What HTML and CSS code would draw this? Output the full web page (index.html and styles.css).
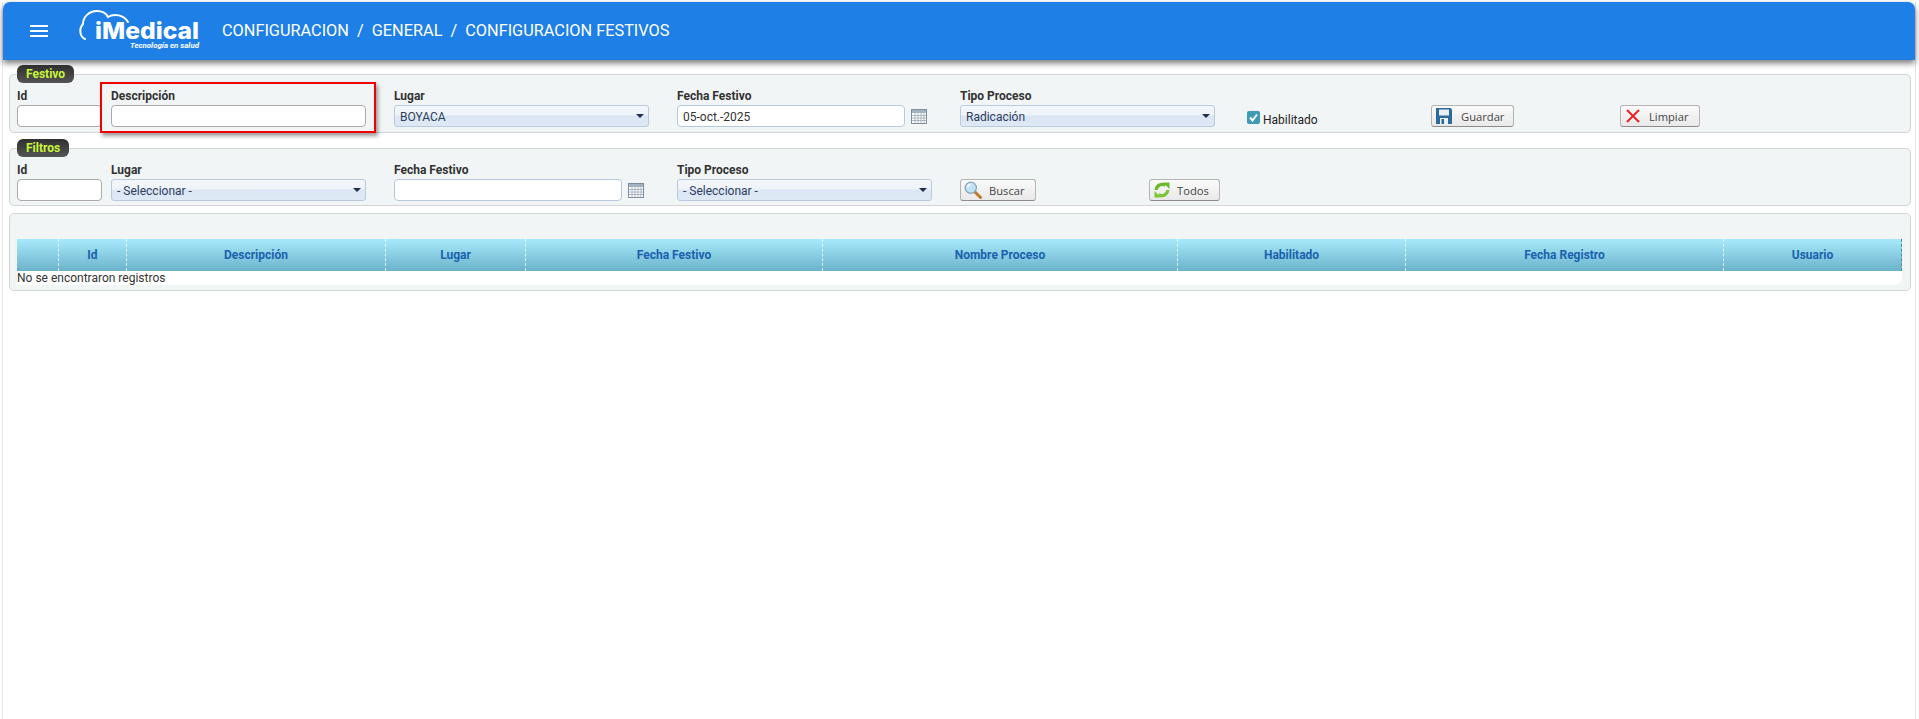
FILE: index.html
```html
<!DOCTYPE html>
<html lang="es">
<head>
    <meta charset="UTF-8">
    <meta name="viewport" content="width=device-width, initial-scale=1.0">
    <title>Configuracion Festivos</title>
    <link rel="stylesheet" href="styles.css">
</head>
<body>

    <div class="page">
        <header class="topbar">
            <button class="menu-btn" aria-label="Menu">
                <span></span><span></span><span></span>
            </button>
            <svg class="logo" width="124" height="42" viewBox="0 0 124 42">
                <path d="M6 30 C1 28 -0.5 20 4 15 C4 8 10 2 18 2 C23 2 27 4 29 8 C35 4 45 6 49 13" fill="none" stroke="#fff" stroke-width="2" stroke-linecap="round"/>
                <text class="logo-name" x="16" y="30" textLength="104" lengthAdjust="spacingAndGlyphs">iMedical</text>
                <text class="logo-tag" x="51" y="39" textLength="69" lengthAdjust="spacingAndGlyphs">Tecnología en salud</text>
            </svg>
            <h1 class="breadcrumb">CONFIGURACION &nbsp;/&nbsp; GENERAL &nbsp;/&nbsp; CONFIGURACION FESTIVOS</h1>
        </header>

        <main class="content">
            <fieldset class="panel">
                <legend>Festivo</legend>
                <div class="form-row form-festivo">
                    <div class="field">
                        <label>Id</label>
                        <input class="input input-id" type="text">
                    </div>
                    <div class="field field-mark">
                        <label>Descripción</label>
                        <input class="input input-id input-desc" type="text">
                    </div>
                    <div class="field">
                        <label>Lugar</label>
                        <div class="select">BOYACA</div>
                    </div>
                    <div class="field">
                        <label>Fecha Festivo</label>
                        <div class="date">
                            <input class="input" type="text" value="05-oct.-2025">
                            <svg class="cal" width="16" height="15" viewBox="0 0 16 15">
                                <rect x=".5" y=".5" width="15" height="14" fill="#fff" stroke="#7d8ea0"/>
                                <rect x="1" y="1" width="14" height="3" fill="#a3b3c2"/>
                                <path d="M4 4v10M7 4v10M10 4v10M13 4v10M1 6.5h14M1 9h14M1 11.5h14" stroke="#98a6b4" stroke-width=".8"/>
                            </svg>
                        </div>
                    </div>
                    <div class="field">
                        <label>Tipo Proceso</label>
                        <div class="select">Radicación</div>
                    </div>
                    <div class="check-field">
                        <span class="check">
                            <svg width="13" height="13" viewBox="0 0 13 13"><path d="M3 6.5l2.5 3L10 3.5" fill="none" stroke="#fff" stroke-width="2"/></svg>
                        </span>
                        <span class="check-text">Habilitado</span>
                    </div>
                    <button class="btn btn-guardar">
                        <svg width="16" height="16" viewBox="0 0 16 16">
                            <path d="M0 0h14.5L16 1.5V16H0z" fill="#2b6a9b"/>
                            <path d="M3 1.5h10v6H3z" fill="#e8f0f6"/>
                            <path d="M4 10h8v6H4z" fill="#e8f0f6"/>
                            <path d="M5.5 11h2.5v5H5.5z" fill="#2b6a9b"/>
                        </svg>
                        Guardar
                    </button>
                    <button class="btn btn-limpiar">
                        <svg width="14" height="14" viewBox="0 0 14 14">
                            <path d="M1 1L13 13M13 1L1 13" stroke="#ee2024" stroke-width="2" fill="none"/>
                        </svg>
                        Limpiar
                    </button>
                </div>
            </fieldset>

            <fieldset class="panel">
                <legend>Filtros</legend>
                <div class="form-row form-filtros">
                    <div class="field">
                        <label>Id</label>
                        <input class="input input-id" type="text">
                    </div>
                    <div class="field">
                        <label>Lugar</label>
                        <div class="select">- Seleccionar -</div>
                    </div>
                    <div class="field">
                        <label>Fecha Festivo</label>
                        <div class="date">
                            <input class="input" type="text">
                            <svg class="cal" width="16" height="15" viewBox="0 0 16 15">
                                <rect x=".5" y=".5" width="15" height="14" fill="#fff" stroke="#7d8ea0"/>
                                <rect x="1" y="1" width="14" height="3" fill="#a3b3c2"/>
                                <path d="M4 4v10M7 4v10M10 4v10M13 4v10M1 6.5h14M1 9h14M1 11.5h14" stroke="#98a6b4" stroke-width=".8"/>
                            </svg>
                        </div>
                    </div>
                    <div class="field">
                        <label>Tipo Proceso</label>
                        <div class="select">- Seleccionar -</div>
                    </div>
                    <button class="btn btn-buscar">
                        <svg width="18" height="18" viewBox="0 0 18 18">
                            <path d="M11 11L16.5 16.5" stroke="#c07a2c" stroke-width="3" stroke-linecap="round"/>
                            <circle cx="6.8" cy="6.8" r="5.6" fill="#bfe4f7" stroke="#8aa3b3" stroke-width="1.3"/>
                            <path d="M3.5 6.5a3.5 3.5 0 0 1 3-3" stroke="#fff" stroke-width="1.3" fill="none"/>
                        </svg>
                        Buscar
                    </button>
                    <button class="btn btn-todos">
                        <svg width="16" height="16" viewBox="0 0 16 16">
                            <path d="M2.2 8 A6 6 0 0 1 11.5 3.4" fill="none" stroke="#6cba2a" stroke-width="3.2"/>
                            <path d="M9 0.5 L15.5 0.5 L15.5 7 Z" fill="#6cba2a"/>
                            <path d="M13.8 8 A6 6 0 0 1 4.5 12.6" fill="none" stroke="#7cc63a" stroke-width="3.2"/>
                            <path d="M7 15.5 L0.5 15.5 L0.5 9 Z" fill="#7cc63a"/>
                        </svg>
                        Todos
                    </button>
                </div>
            </fieldset>

            <section class="panel grid-panel">
                <table class="grid">
                    <thead>
                        <tr>
                            <th class="col-sel"></th>
                            <th class="col-id">Id</th>
                            <th class="col-desc">Descripción</th>
                            <th class="col-lugar">Lugar</th>
                            <th class="col-fecha">Fecha Festivo</th>
                            <th class="col-proc">Nombre Proceso</th>
                            <th class="col-hab">Habilitado</th>
                            <th class="col-reg">Fecha Registro</th>
                            <th>Usuario</th>
                        </tr>
                    </thead>
                    <tbody>
                        <tr>
                            <td colspan="9">No se encontraron registros</td>
                        </tr>
                    </tbody>
                </table>
            </section>
        </main>
    </div>

</body>
</html>
```

FILE: styles.css
```css
* {
    box-sizing: border-box;
}

body {
    margin: 0;
    padding: 2px 3px 0 2px;
    background-color: #fff;
    font-family: Roboto, "Liberation Sans", sans-serif;
    font-size: 12px;
    color: #222;
    overflow: hidden;
}

.page {
    height: 717px;
    border-left: 1px solid #e9e9e9;
    border-right: 1px solid #e4e4e4;
}

.topbar {
    display: flex;
    align-items: center;
    height: 58px;
    padding-left: 27px;
    background-color: #1e7fe6;
    border-radius: 7px 7px 0 0;
    box-shadow: 0 3px 6px rgba(0, 0, 0, 0.55);
    color: #fff;
}

.menu-btn {
    display: flex;
    flex-direction: column;
    gap: 3px;
    width: 18px;
    padding: 0;
    border: none;
    background: none;
}

.menu-btn span {
    height: 2px;
    background-color: #fff;
}

.logo {
    margin: -2px 0 0 31px;
    overflow: visible;
}

.logo-name {
    font-family: Inter, sans-serif;
    font-size: 23px;
    font-weight: 800;
    fill: #fff;
}

.logo-tag {
    font-family: Roboto, sans-serif;
    font-size: 8px;
    font-weight: 700;
    font-style: italic;
    fill: #fff;
}

.breadcrumb {
    margin: -2px 0 0 19px;
    font-size: 16.3px;
    font-weight: 400;
    white-space: pre;
}

.content {
    padding: 5px 4px 0 6px;
}

.panel {
    min-width: 0;
    margin: 0 0 6px;
    padding: 0 7px;
    background-color: #f2f5f6;
    border: 1px solid #d2d5d5;
    border-radius: 5px;
}

.panel legend {
    height: 18px;
    margin-left: 0;
    padding: 0 9px;
    background: linear-gradient(#2f2f2f, #555);
    border-radius: 6px;
    color: #c8f53a;
    font-size: 12px;
    font-weight: 700;
    line-height: 18px;
}

.form-row {
    display: grid;
    align-items: end;
    padding: 6px 0 5px;
}

.form-festivo {
    grid-template-columns: 94px 283px 283px 283px 287px 184px 189px 80px;
}

.form-filtros {
    grid-template-columns: 94px 283px 283px 283px 189px 71px;
    padding-bottom: 4px;
}

.field {
    display: flex;
    flex-direction: column;
    position: relative;
}

.field label {
    height: 16px;
    font-weight: 700;
    line-height: 14px;
    color: #333;
}

.field-mark::before {
    content: "";
    position: absolute;
    top: -7px;
    left: -11px;
    width: 272px;
    height: 47px;
    border: 2px solid #f00000;
    box-shadow: 2px 3px 4px rgba(0, 0, 0, 0.4);
    pointer-events: none;
}

.input {
    width: 228px;
    height: 22px;
    padding: 2px 5px 0;
    background-color: #fff;
    border: 1px solid #b6c9e0;
    border-radius: 4px;
    font-family: inherit;
    font-size: 12px;
    color: #333;
}

.input-id {
    width: 85px;
    border-color: #aaa;
}

.input-desc {
    width: 255px;
}

.select {
    position: relative;
    width: 255px;
    height: 22px;
    padding: 0 5px;
    background: linear-gradient(#f4f7fb 0, #eef3f9 45%, #dbe6f4 50%, #dfe8f5 100%);
    border: 1px solid #b9cadf;
    border-radius: 3px;
    line-height: 22px;
    color: #2f3e5c;
}

.select::after {
    content: "";
    position: absolute;
    top: 8px;
    right: 4px;
    border-top: 4px solid #1f2f50;
    border-left: 4px solid transparent;
    border-right: 4px solid transparent;
}

.date {
    display: flex;
    align-items: center;
    gap: 6px;
}

.cal {
    flex: none;
}

.check-field {
    display: flex;
    align-items: flex-end;
    gap: 3px;
    color: #222;
}

.check {
    display: block;
    width: 13px;
    height: 13px;
    margin-bottom: 3px;
    background-color: #3e9bb3;
    border-radius: 2px;
}

.check svg {
    display: block;
}

.check-text {
    line-height: 14px;
}

.btn {
    display: flex;
    align-items: center;
    height: 22px;
    padding: 0 0 0 4px;
    background: linear-gradient(#fafafa, #e9e9e9);
    border: 1px solid #b4b4b4;
    border-bottom-color: #8c8c8c;
    border-radius: 3px;
    font-family: "Open Sans", sans-serif;
    font-size: 11.2px;
    color: #454545;
}

.btn-guardar {
    width: 83px;
    gap: 9px;
}

.btn-limpiar {
    width: 80px;
    gap: 9px;
    padding-left: 5px;
}

.btn-buscar {
    width: 76px;
    gap: 7px;
    padding-left: 3px;
}

.btn-todos {
    width: 71px;
    gap: 7px;
}

.grid-panel {
    margin-top: 7px;
    padding: 25px 8px 5px 7px;
    height: 78px;
}

.grid {
    width: 100%;
    border-collapse: separate;
    border-spacing: 0;
    table-layout: fixed;
    background-color: #fff;
    border-radius: 0 0 8px 0;
}

.grid th {
    height: 32px;
    padding: 0;
    background: linear-gradient(#a8eafc, #6bb2ca);
    border-left: 1px dashed #e6f4f8;
    font-size: 12px;
    font-weight: 700;
    color: #1a62ad;
}

.grid th:first-child {
    border-left: none;
}

.grid th:last-child {
    border-right: 1px dashed #4f88a2;
}

.grid td {
    height: 14px;
    padding: 0;
    line-height: 14px;
    color: #333;
}

.col-sel { width: 41px; }
.col-id { width: 68px; }
.col-desc { width: 259px; }
.col-lugar { width: 140px; }
.col-fecha { width: 297px; }
.col-proc { width: 355px; }
.col-hab { width: 228px; }
.col-reg { width: 318px; }
```
